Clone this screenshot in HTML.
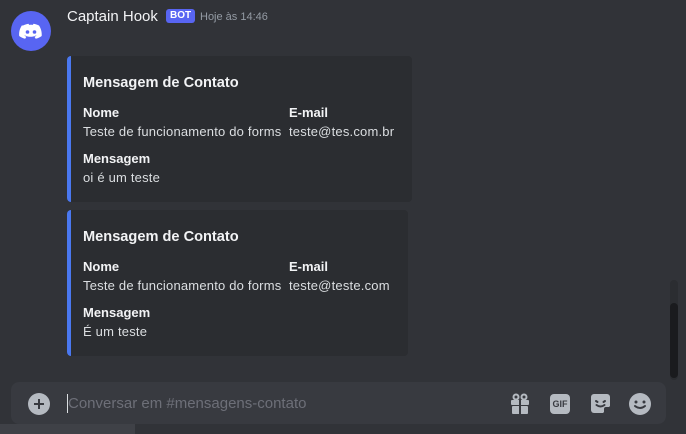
<!DOCTYPE html>
<html><head><meta charset="utf-8"><style>
*{margin:0;padding:0;box-sizing:border-box}
body{width:686px;height:434px;background:#313338;font-family:"Liberation Sans",sans-serif;position:relative;overflow:hidden;color:#dbdee1}
.abs{position:absolute;white-space:nowrap}
.embed{position:absolute;left:67px;background:#2b2d31;border-left:4px solid #4a78f0;border-radius:4px;height:146px}
.t{font-weight:bold;font-size:14.6px;color:#f2f3f5}
.n{font-weight:bold;font-size:13px;color:#f2f3f5}
.v{font-size:13px;letter-spacing:0.2px;color:#dbdee1}
</style></head><body>
<div class="abs" style="left:11px;top:11px;width:40px;height:40px;border-radius:50%;background:#5865f2">
<svg width="40" height="40" viewBox="0 0 40 40"><path d="M12 14.5c2-1 4-1.6 5.5-1.8l.6 1.2c1.3-.2 2.5-.2 3.8 0l.6-1.2c1.6.2 3.5.8 5.5 1.8 2 3 3 6.5 2.7 10.5-2 1.5-4 2.3-6 2.8l-1.2-2c.7-.3 1.4-.6 2-1-.2-.1-.3-.2-.5-.3-3.6 1.7-7.5 1.7-11.1 0-.2.1-.3.2-.5.3.6.4 1.3.7 2 1l-1.2 2c-2-.5-4-1.3-6-2.8-.4-4.3.8-7.700 2.6-10.5z" fill="#fff"/><circle cx="16.5" cy="21" r="1.8" fill="#5865f2"/><circle cx="23.5" cy="21" r="1.8" fill="#5865f2"/></svg></div>
<div class="abs" style="left:67px;top:8px;font-size:15px;color:#f2f3f5">Captain Hook</div>
<div class="abs" style="left:166px;top:9px;height:14px;padding:0 4px;background:#5865f2;border-radius:3px;font-size:10px;line-height:14px;color:#fff;font-weight:bold">BOT</div>
<div class="abs" style="left:200px;top:11px;font-size:11px;color:#949ba4">Hoje às 14:46</div>

<div class="embed" style="top:56px;width:345px">
<div class="abs t" style="left:12px;top:19px">Mensagem de Contato</div>
<div class="abs n" style="left:12px;top:49px">Nome</div>
<div class="abs v" style="left:12px;top:68px">Teste de funcionamento do forms</div>
<div class="abs n" style="left:218px;top:49px">E-mail</div>
<div class="abs v" style="left:218px;top:68px">teste@tes.com.br</div>
<div class="abs n" style="left:12px;top:95px">Mensagem</div>
<div class="abs v" style="left:12px;top:114px">oi é um teste</div>
</div>
<div class="embed" style="top:210px;width:341px">
<div class="abs t" style="left:12px;top:19px">Mensagem de Contato</div>
<div class="abs n" style="left:12px;top:49px">Nome</div>
<div class="abs v" style="left:12px;top:68px">Teste de funcionamento do forms</div>
<div class="abs n" style="left:218px;top:49px">E-mail</div>
<div class="abs v" style="left:218px;top:68px">teste@teste.com</div>
<div class="abs n" style="left:12px;top:95px">Mensagem</div>
<div class="abs v" style="left:12px;top:114px">É um teste</div>
</div>

<div class="abs" style="left:670px;top:280px;width:8px;height:100px;background:#2b2d31;border-radius:4px"></div>
<div class="abs" style="left:670px;top:303px;width:8px;height:75px;background:#1a1b1e;border-radius:4px"></div>

<div class="abs" style="left:11px;top:382px;width:655px;height:42px;background:#383a40;border-radius:8px"></div>
<div class="abs" style="left:28px;top:393px;width:22px;height:22px;border-radius:50%;background:#b5bac1"></div>
<div class="abs" style="left:34px;top:403px;width:10px;height:2px;background:#383a40"></div>
<div class="abs" style="left:38px;top:399px;width:2px;height:10px;background:#383a40"></div>
<div class="abs" style="left:67px;top:394px;width:1px;height:19px;background:#dbdee1"></div>
<div class="abs" style="left:68px;top:395px;font-size:15px;color:#6d6f78">Conversar em #mensagens-contato</div>
<svg class="abs" style="left:510px;top:393px" width="20" height="22" viewBox="0 0 20 22"><rect x="1" y="7" width="18" height="5" rx="1" fill="#b5bac1"/><rect x="2" y="13" width="16" height="8" rx="1" fill="#b5bac1"/><rect x="9" y="6" width="2" height="16" fill="#383a40"/><circle cx="6" cy="4" r="2.5" fill="none" stroke="#b5bac1" stroke-width="2"/><circle cx="14" cy="4" r="2.5" fill="none" stroke="#b5bac1" stroke-width="2"/></svg>
<div class="abs" style="left:550px;top:394px;width:20px;height:20px;background:#b5bac1;border-radius:4px;font-size:9px;font-weight:bold;color:#383a40;text-align:center;line-height:20px">GIF</div>
<svg class="abs" style="left:590px;top:393px" width="21" height="21" viewBox="0 0 21 21"><path d="M4 1h13a3 3 0 0 1 3 3v9l-7 7H4a3 3 0 0 1-3-3V4a3 3 0 0 1 3-3z" fill="#b5bac1"/><path d="M6 8l1.5 1M15 8l-1.5 1M6.5 12q4 3 8 0" stroke="#383a40" stroke-width="2" fill="none" stroke-linecap="round"/><path d="M14 20l6-6h-4a2 2 0 0 0-2 2z" fill="#383a40"/></svg>
<svg class="abs" style="left:628px;top:392px" width="24" height="24" viewBox="0 0 24 24"><circle cx="12" cy="12" r="11" fill="#b5bac1"/><circle cx="8" cy="10" r="1.5" fill="#383a40"/><circle cx="16" cy="10" r="1.5" fill="#383a40"/><path d="M7 14q5 4 10 0" stroke="#383a40" stroke-width="2" fill="none" stroke-linecap="round"/></svg>
<div class="abs" style="left:0;top:424px;width:135px;height:10px;background:#3f4147"></div>
</body></html>
